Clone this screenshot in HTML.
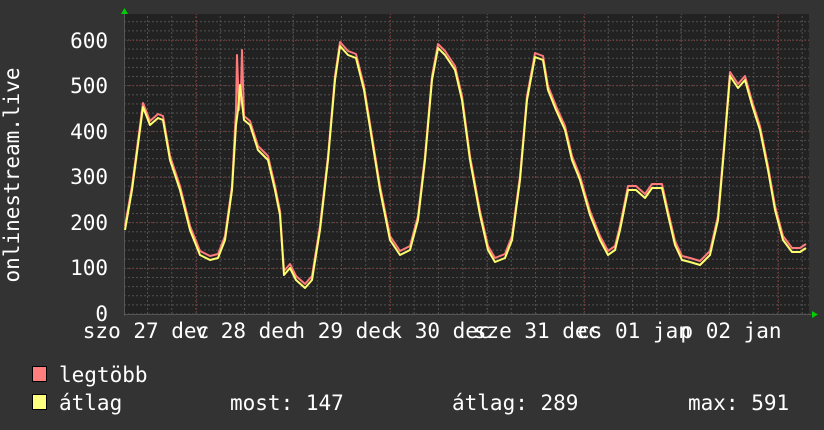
<!DOCTYPE html>
<html><head><meta charset="utf-8"><style>
html,body{margin:0;padding:0;background:#333;}
svg{display:block;}
text{font-family:"DejaVu Sans Mono","Liberation Mono",monospace;fill:#fff;font-size:21px;}
</style></head><body>
<svg width="824" height="430" viewBox="0 0 824 430" xmlns="http://www.w3.org/2000/svg">
<defs>
<pattern id="gv" patternUnits="userSpaceOnUse" x="122.75" y="0" width="24.25" height="4">
<line x1="0.5" y1="0" x2="0.5" y2="2" stroke="#505050" stroke-width="1"/>
</pattern>
<pattern id="gh" patternUnits="userSpaceOnUse" x="0" y="313.5" width="4" height="9.134">
<line x1="0" y1="0.5" x2="2" y2="0.5" stroke="#505050" stroke-width="1"/>
</pattern>
</defs>
<rect x="0" y="0" width="824" height="430" fill="#333"/>
<rect x="124" y="14" width="685" height="300" fill="#222"/>
<rect x="124" y="14" width="685" height="300" fill="url(#gv)"/>
<rect x="124" y="14" width="685" height="300" fill="url(#gh)"/>
<g stroke="#7a3a3a" stroke-width="1" stroke-dasharray="1,2">
<line x1="124" y1="268.5" x2="809" y2="268.5"/>
<line x1="124" y1="222.5" x2="809" y2="222.5"/>
<line x1="124" y1="177.5" x2="809" y2="177.5"/>
<line x1="124" y1="131.5" x2="809" y2="131.5"/>
<line x1="124" y1="85.5" x2="809" y2="85.5"/>
<line x1="124" y1="40.5" x2="809" y2="40.5"/>
<line x1="196.5" y1="14" x2="196.5" y2="314"/>
<line x1="293.5" y1="14" x2="293.5" y2="314"/>
<line x1="390.5" y1="14" x2="390.5" y2="314"/>
<line x1="487.5" y1="14" x2="487.5" y2="314"/>
<line x1="584.5" y1="14" x2="584.5" y2="314"/>
<line x1="681.5" y1="14" x2="681.5" y2="314"/>
<line x1="778.5" y1="14" x2="778.5" y2="314"/>
</g>
<line x1="124" y1="314.5" x2="812" y2="314.5" stroke="#555"/>
<line x1="124.5" y1="12" x2="124.5" y2="316" stroke="#555"/>
<polygon points="121,14 124.5,8 128,14" fill="#0c0"/>
<polygon points="812,311 818,314.5 812,318" fill="#0c0"/>

<g fill="none" stroke-linejoin="round" stroke-width="2">
<polyline stroke="#ff7a7a" points="125,226 132,186 143,103 150,121 158,114 163,116 170,156 180,186 190,226 200,251 210,256 218,254 225,236 232,186 236,110 237,55 239,110 241,90 242,50 244,116 250,121 258,146 268,156 275,186 280,211 284,271 290,264 296,276 305,284 312,276 320,226 328,156 335,76 340,42 348,51 356,54 364,86 372,136 380,186 390,236 400,251 410,246 418,216 425,156 432,76 438,44 445,51 455,66 462,96 470,156 480,211 488,246 495,258 505,254 512,236 520,176 527,96 535,53 543,56 548,86 556,106 565,126 572,156 580,176 590,211 600,236 608,251 615,246 620,226 628,186 636,186 645,194 652,184 662,184 668,211 675,241 682,256 690,258 700,261 710,251 718,216 724,146 730,72 738,84 745,76 752,101 760,126 768,166 775,206 783,236 792,248 800,248 806,244"/>
<polyline stroke="#ffff70" points="125,230 132,190 143,107 150,125 158,118 163,120 170,160 180,190 190,230 200,255 210,260 218,258 225,240 232,190 236,125 238,110 240,85 244,120 250,125 258,150 268,160 275,190 280,215 284,275 290,268 296,280 305,288 312,280 320,230 328,160 335,80 340,46 348,55 356,58 364,90 372,140 380,190 390,240 400,255 410,250 418,220 425,160 432,80 438,48 445,55 455,70 462,100 470,160 480,215 488,250 495,262 505,258 512,240 520,180 527,100 535,57 543,60 548,90 556,110 565,130 572,160 580,180 590,215 600,240 608,255 615,250 620,230 628,190 636,190 645,198 652,188 662,188 668,215 675,245 682,260 690,262 700,265 710,255 718,220 724,150 730,76 738,88 745,80 752,105 760,130 768,170 775,210 783,240 792,252 800,252 806,248"/>
</g>

<g text-anchor="end">
<text x="108" y="321">0</text>
<text x="108" y="275">100</text>
<text x="108" y="230">200</text>
<text x="108" y="184">300</text>
<text x="108" y="139">400</text>
<text x="108" y="93">500</text>
<text x="108" y="48">600</text>
</g>
<text transform="translate(19,175) rotate(-90)" text-anchor="middle">onlinestream.live</text>

<g text-anchor="middle">
<text x="146" y="338">szo 27 dec</text>
<text x="246" y="338">v 28 dec</text>
<text x="343" y="338">h 29 dec</text>
<text x="440" y="338">k 30 dec</text>
<text x="537" y="338">sze 31 dec</text>
<text x="634" y="338">cs 01 jan</text>
<text x="731" y="338">p 02 jan</text>
</g>

<rect x="32.5" y="366.5" width="14" height="15" fill="#ff7f7f" stroke="#000"/>
<text x="59" y="382">legtöbb</text>
<rect x="32.5" y="394.5" width="14" height="15" fill="#ffff7f" stroke="#000"/>
<text x="59" y="410">átlag</text>
<text x="230" y="410">most: 147</text>
<text x="452" y="410">átlag: 289</text>
<text x="688" y="410">max: 591</text>
</svg>
</body></html>
